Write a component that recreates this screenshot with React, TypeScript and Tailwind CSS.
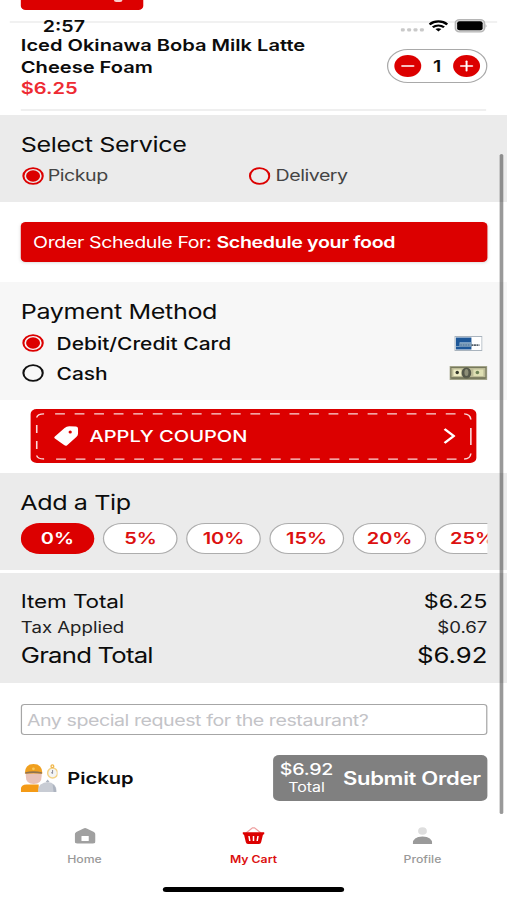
import { Minus, Plus } from "lucide-react";

const tips = ["0%", "5%", "10%", "15%", "20%", "25%"];

const Radio = ({ checked, className }: { checked?: boolean; className: string }) => (
  <svg viewBox="0 0 18 18" className={`h-[18px] w-[18px] shrink-0 ${className}`}>
    <circle cx="9" cy="9" r="7.9" fill="none" stroke="currentColor" strokeWidth="1.7" />
    {checked && <circle cx="9" cy="9" r="5.7" fill="currentColor" />}
  </svg>
);

const StatusBar = () => (
  <div className="absolute inset-x-0 top-0 h-[44px]">
    <span className="absolute left-[35px] top-[16px] text-[16px] font-semibold leading-[20px]">2:57</span>
    <div className="absolute right-[16px] top-[19px] flex items-center">
      <svg viewBox="0 0 20 4" className="mr-[3.5px] mt-[7px] h-[4px] w-[20px] fill-[#c9c9c9]">
        <rect x="0.3" y="0.3" width="3.2" height="3.2" rx="1" />
        <rect x="5.5" y="0.3" width="3.2" height="3.2" rx="1" />
        <rect x="10.7" y="0.3" width="3.2" height="3.2" rx="1" />
        <rect x="15.9" y="0.3" width="3.2" height="3.2" rx="1" />
      </svg>
      <svg viewBox="0 0 16 12" className="mr-[5px] h-[12px] w-[16px]" fill="none" stroke="#000" strokeWidth="2.1">
        <path d="M0.8 4.4 C4.8 0.4 11.2 0.4 15.2 4.4" />
        <path d="M3.4 7.3 C6 4.9 10 4.9 12.6 7.3" />
        <path d="M5.6 9.1 Q8 7.3 10.4 9.1 L8 11.6 Z" fill="#000" stroke="none" />
      </svg>
      <svg viewBox="0 0 27 14" className="h-[14px] w-[27px]">
        <rect x="0.7" y="0.6" width="24" height="12.2" rx="3.6" fill="#ddd" stroke="#b5b5b5" strokeWidth="1.2" />
        <rect x="2.3" y="2.2" width="20.8" height="9" rx="2" fill="#000" />
        <path d="M25.6 5 Q27 6.9 25.6 8.8 Z" fill="#999" />
      </svg>
    </div>
  </div>
);

const Product = () => (
  <section className="h-[115px]">
    <div className="mx-[16.5px] flex h-[10px] w-[100px] justify-end overflow-hidden rounded-b-[4px] bg-[#dc0000]">
      <span className="mr-[17px] h-[1.5px] w-[7px] rounded-b bg-white/80" />
    </div>
    <div className="mx-[8px] mt-[11px] h-[2px] bg-[#f1f1f1]" />
    <div className="mx-[17px] flex h-[86px] justify-between">
      <div className="pt-[11px]">
        <p className="w-[270px] text-[16.4px] font-semibold leading-[22px]">
          Iced Okinawa Boba Milk Latte
          <br />
          Cheese Foam
        </p>
        <p className="text-[16.4px] font-semibold leading-[20px] text-[#ee2b33]">$6.25</p>
      </div>
      <div className="-mr-px mt-[26px] flex h-[34px] w-[82px] items-center justify-between rounded-full border border-[#a9a9a9] px-[5px]">
        <button className="flex size-[22px] items-center justify-center rounded-full bg-[#dc0000] text-white">
          <Minus className="size-[16px]" strokeWidth={2.4} />
        </button>
        <span className="text-[16px] font-semibold">1</span>
        <button className="flex size-[22px] items-center justify-center rounded-full bg-[#dc0000] text-white">
          <Plus className="size-[16px]" strokeWidth={2.4} />
        </button>
      </div>
    </div>
    <div className="mx-[17px] h-[2px] bg-[#efefef]" />
  </section>
);

const Service = () => (
  <section className="h-[87px] bg-[#ebebeb] px-[17px] pt-[17px]">
    <h2 className="text-[20.5px] leading-[25px] tracking-[-0.3px]">Select Service</h2>
    <div className="mt-[9px] flex text-[16px] leading-[19px] tracking-[-0.38px] text-[#444]">
      <label className="flex w-[186px] items-center gap-[4px]">
        <Radio checked className="ml-[0.7px] -mr-[0.7px] text-[#dc0000]" />
        Pickup
      </label>
      <label className="flex items-center gap-[4px]">
        <Radio className="ml-[0.2px] -mr-[0.2px] text-[#dc0000]" />
        Delivery
      </label>
    </div>
  </section>
);

const CardIcon = () => (
  <svg viewBox="0 0 28 15" className="mr-[4.500px] h-[15px] w-[23px]" preserveAspectRatio="none">
    <rect x="0.5" y="0.5" width="27" height="14" fill="#fff" stroke="#a9b3bd" />
    <rect x="1.5" y="1.5" width="15.5" height="12" fill="#1d5798" />
    <path d="M1.500 10.500h4v-4H17" stroke="#8fb0cf" strokeWidth="0.8" fill="none" />
    <rect x="5.500" y="7" width="11.500" height="3.800" fill="#7f9fba" />
    <path d="M6 9h10" stroke="#456f99" strokeDasharray="1.5 1" />
    <path d="M17 9.200h8" stroke="#54606b" strokeWidth="1.8" strokeDasharray="2 .5" />
  </svg>
);

const CashIcon = () => (
  <svg viewBox="0 0 38 14" className="h-[14px] w-[31px]" preserveAspectRatio="none">
    <rect width="38" height="14" fill="#a3a48a" />
    <rect x="1.5" y="1.5" width="35" height="10.500" fill="#bdbc97" stroke="#77795d" />
    <rect x="4" y="3.5" width="8" height="6.500" fill="#eeecc4" />
    <rect x="24" y="3.5" width="10" height="6.500" fill="#dfe0b4" />
    <ellipse cx="17" cy="7" rx="4.8" ry="5.5" fill="#55584a" />
    <ellipse cx="17" cy="6.5" rx="2" ry="3.6" fill="#8d8e77" />
    <circle cx="7.800" cy="6.5" r="1.700" fill="#34382c" />
    <circle cx="28" cy="6.5" r="1.8" fill="#6e8257" />
    <path d="M2 12h34" stroke="#66684e" strokeWidth="1.200" />
  </svg>
);

const Payment = () => (
  <section className="mt-[20px] h-[118px] bg-[#f7f7f7] pl-[17px] pr-[16px] pt-[17px]">
    <h2 className="text-[20.5px] leading-[25px] tracking-[-0.3px]">Payment Method</h2>
    <div className="mt-[4px] flex h-[30px] items-center text-[17.100px] font-medium leading-[24px]">
      <Radio checked className="ml-[0.8px] mr-[10.400px] text-[#dc0000]" />
      <span className="flex-1 pt-px">Debit/Credit Card</span>
      <CardIcon />
    </div>
    <div className="flex h-[30px] items-center text-[17.100px] font-medium leading-[24px]">
      <Radio className="ml-[0.8px] mr-[10.400px] text-[#111]" />
      <span className="flex-1 pt-px">Cash</span>
      <CashIcon />
    </div>
  </section>
);

const Coupon = () => (
  <button className="relative mx-[25px] mt-[9px] flex h-[54px] w-[364px] items-center rounded-[5px] bg-[#dc0000] text-white">
    <svg viewBox="0 0 364 54" className="absolute inset-0 h-full w-full" fill="none" stroke="#fff" strokeOpacity="0.85" strokeWidth="1.3">
      <path d="M20 4.8H348" strokeDasharray="8 7.95" />
      <path d="M20.800 50.200H348" strokeDasharray="8 7.95" />
      <path d="M5 8.5Q5.500 4.800 11 4.800M5 46.500Q5.500 50 11 50M354 4.800Q359 5 359.500 10.500M354 50Q359 50 359.500 44.500" />
      <path d="M5 16v8M5 32v8M359.500 19v17" />
    </svg>
    <svg viewBox="0 0 24 20" className="ml-[18.500px] mr-[9.500px] h-[20px] w-[20px]" preserveAspectRatio="none">
      <path d="M1 10.500 10.500 2Q12.500 0.300 15 0.300L21.500 0.500Q23.600 0.600 23.700 2.800V7.500Q23.600 9.500 22 11L13 19.200Q11.600 20.300 10 19L1 12.500Q-.2 11.500 1 10.500Z" fill="#fff" />
      <circle cx="16" cy="6" r="1.600" fill="#dc0000" />
    </svg>
    <span className="text-[16.4px] font-medium">APPLY COUPON</span>
    <svg viewBox="0 0 10 16" className="absolute right-[17px] h-[16px] w-[10px]" fill="none" stroke="#fff" strokeWidth="2.2">
      <path d="M1 1l7.500 7L1 15" />
    </svg>
  </button>
);

const Tips = () => (
  <section className="mt-[10px] h-[97px] bg-[#ebebeb] px-[16.500px] pt-[17px]">
    <h2 className="text-[20.5px] leading-[25px] tracking-[-0.3px]">Add a Tip</h2>
    <div className="mt-[8px] flex gap-[7px] overflow-hidden">
      {tips.map((tip, i) => (
        <button
          key={tip}
          className={
            i === 0
              ? "h-[31px] w-[60.800px] shrink-0 rounded-full bg-[#dc0000] text-[16.3px] font-semibold text-white"
              : "h-[31px] w-[60.800px] shrink-0 rounded-full border border-[#adadad] bg-white text-[16.3px] font-semibold text-[#dc1010]"
          }
        >
          {tip}
        </button>
      ))}
    </div>
  </section>
);

const Totals = () => (
  <section className="mt-[3px] h-[110px] bg-[#ebebeb] pl-[17px] pr-[16px] pt-[16px]">
    <div className="flex h-[26px] items-center justify-between text-[18.400px]">
      <span className="tracking-[-0.1px]">Item Total</span>
      <span className="text-[19px]">$6.25</span>
    </div>
    <div className="flex h-[26px] items-center justify-between text-[15.2px] text-[#222]">
      <span>Tax Applied</span>
      <span>$0.67</span>
    </div>
    <div className="flex h-[29px] items-center justify-between text-[21px]">
      <span className="tracking-[-0.65px]">Grand Total</span>
      <span>$6.92</span>
    </div>
  </section>
);

const PickupIcon = () => (
  <svg viewBox="0 0 37 28" className="mr-[8.500px] h-[28px] w-[30px]" preserveAspectRatio="none">
    <path d="M5 9h16v3q0 8-8 8t-8-8z" fill="#e8c2b8" />
    <path d="M4 9.500Q4 0 12.800 0T21.800 9.500z" fill="#f0a01f" />
    <path d="M4.500 8.200Q12.500 6.500 21.300 8.200V9.800Q12.500 8.300 4.500 9.800z" fill="#8f7350" />
    <circle cx="12.700" cy="4.800" r="1.400" fill="#f8c75c" />
    <path d="M0 28v-2.500q0-5 6-5h12v7.500z" fill="#f49a16" />
    <path d="M17.500 28Q17 23.500 20 20.500 23 18 27 18T34 21Q36.500 24 36 28z" fill="#c8ccd4" />
    <path d="M25 18l2-2.500 2 2.500zM32 20q4 3 3.500 8h-2.500z" fill="#adb4c0" />
    <ellipse cx="32" cy="9" rx="5" ry="5" fill="#f3f4f4" stroke="#f4d183" strokeWidth="1.500" />
    <circle cx="31.800" cy="2.300" r="1.400" fill="none" stroke="#f0b64a" strokeWidth="1.300" />
    <path d="M32 6v3.500l-1.500-1" stroke="#889" strokeWidth="1" fill="none" />
  </svg>
);

const Checkout = () => (
  <section className="px-[16.500px] pt-[21px]">
    <div className="flex h-[31px] items-center rounded-[3px] border border-[#a6a6a6] px-[4.500px] text-[16px] tracking-[-0.36px] text-[#c3c3c7]">
      Any special request for the restaurant?
    </div>
    <div className="mt-[20px] flex h-[46px] items-center">
      <PickupIcon />
      <span className="flex-1 text-[16.4px] font-semibold">Pickup</span>
      <button className="flex h-[46px] w-[174.500px] items-center justify-between rounded-[5px] bg-[#808080] pl-[5.500px] pr-[5px] text-white">
        <span className="flex flex-col items-center">
          <span className="text-[16px] font-medium leading-[18px] tracking-[-0.2px]">$6.92</span>
          <span className="text-[13px] leading-[18px]">Total</span>
        </span>
        <span className="text-[18px] font-semibold tracking-[-0.240px]">Submit Order</span>
      </button>
    </div>
  </section>
);

const TabBar = () => (
  <nav className="mt-[26px] flex text-[10px] font-medium leading-[14px] text-[#999]">
    <div className="flex flex-1 flex-col items-center gap-[6.500px]">
      <svg viewBox="0 0 20 18" className="h-[18px] w-[17px]" preserveAspectRatio="none">
        <path d="M10 1Q10.700 1 12 1.700L18.500 5Q20 6 20 7.500V14q0 2.500-2.500 2.500h-15Q0 16.500 0 14V7.500Q0 6 1.500 5L8 1.700Q9.300 1 10 1Z" fill="#a0a0a0" />
        <rect x="6.500" y="9" width="7" height="5" rx="0.500" fill="#fff" />
      </svg>
      Home
    </div>
    <div className="flex flex-1 flex-col items-center gap-[6.500px] font-semibold text-[#dc1010]">
      <svg viewBox="0 0 22 18" className="h-[18px] w-[18px]" preserveAspectRatio="none">
        <path d="M3.500 6L10 .8h2L18.500 6" fill="none" stroke="#eea0a0" strokeWidth="1.300" />
        <path d="M.5 5.200h21q.8 0 .5 1.300l-.5 1h-1L18.700 15q-.4 2-2.200 2h-11q-1.800 0-2.200-2L1.500 7.500H.5Q-.4 5.200.5 5.200Z" fill="#dc0000" />
        <path d="M6.500 9l.8 5M11 9v5M15.500 9l-.8 5" stroke="#fff" strokeWidth="1.500" />
      </svg>
      My Cart
    </div>
    <div className="flex flex-1 flex-col items-center gap-[6.500px]">
      <svg viewBox="0 0 20 18" className="h-[18px] w-[16px]" preserveAspectRatio="none">
        <ellipse cx="10" cy="4" rx="4.500" ry="3.800" fill="#dedede" />
        <path d="M0 17Q0 9.500 10 9.500T20 17Z" fill="#9a9a9a" />
      </svg>
      Profile
    </div>
  </nav>
);

const App: React.FC = () => {
  return (
    <div className="h-[900px] w-[507px] overflow-hidden bg-white">
      {/* 414pt wide phone canvas stretched to the window */}
      <div className="relative h-[900px] w-[414px] origin-top-left scale-x-[1.2246] overflow-hidden bg-white font-['Inter',sans-serif] text-[#0c0c0c]">
        <Product />
        <Service />
        <div className="mx-[16.500px] mt-[20px] flex h-[40px] items-center rounded-[4px] bg-[#dc0000] px-[10.500px] text-[16px] text-white shadow-sm">
          <span className="tracking-[-0.33px]">
            Order Schedule For: <b className="font-semibold tracking-[-0.27px]">Schedule your food</b>
          </span>
        </div>
        <Payment />
        <Coupon />
        <Tips />
        <Totals />
        <Checkout />
        <TabBar />
        <StatusBar />
        {/* scroll indicator */}
        <div className="absolute right-[3px] top-[154px] h-[660px] w-[3px] rounded-full bg-black/40" />
        {/* home indicator */}
        <div className="absolute bottom-[8px] left-1/2 h-[5px] w-[148px] -translate-x-1/2 rounded-full bg-black" />
      </div>
    </div>
  );
};

export default App;
